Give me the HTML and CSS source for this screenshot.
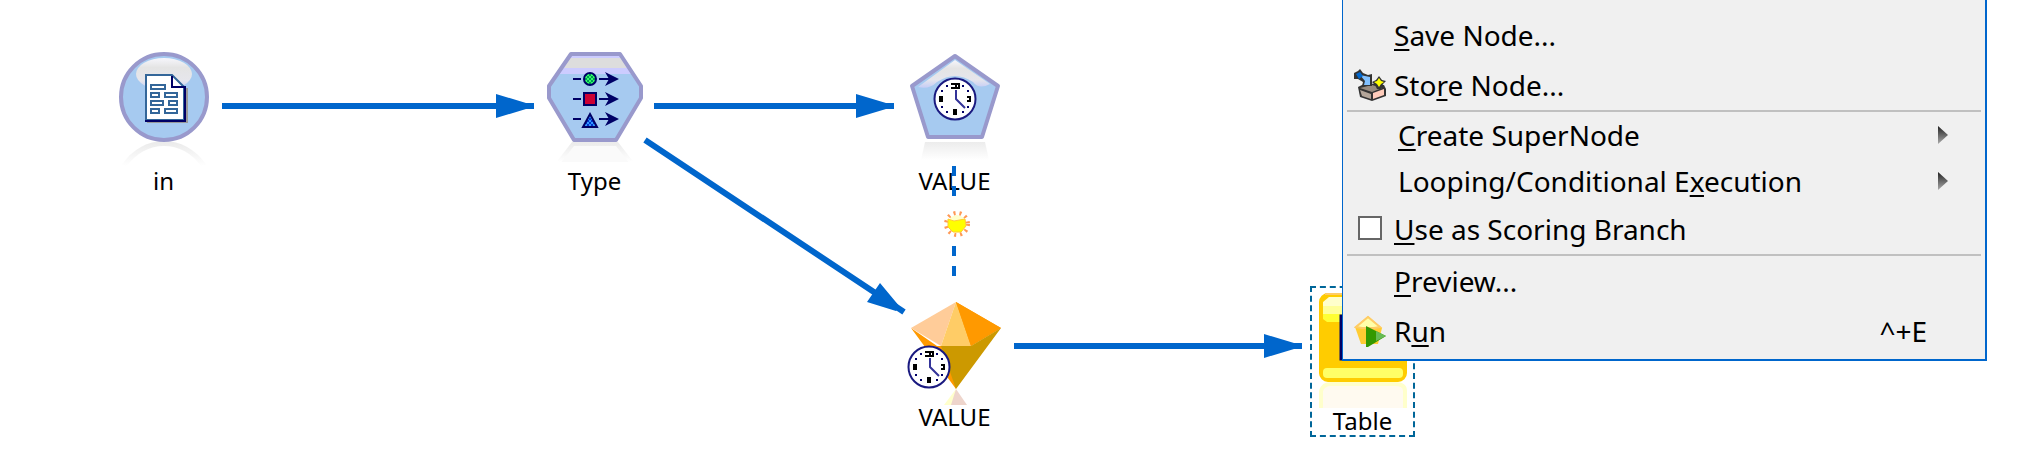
FILE: index.html
```html
<!DOCTYPE html>
<html lang="en">
<head>
<meta charset="utf-8">
<title>Stream canvas</title>
<link rel="stylesheet" href="styles.css">
</head>
<body>
<main class="canvas">
  <svg class="defs" width="0" height="0" aria-hidden="true">
    <defs>
      <linearGradient id="gloss" x1="0" y1="0" x2="0" y2="1">
        <stop offset="0" stop-color="#f6f6fc"/><stop offset=".3" stop-color="#e4e4e4"/><stop offset=".7" stop-color="#e6e6ec"/><stop offset="1" stop-color="#c4ccf6"/>
      </linearGradient>
      <linearGradient id="fade" x1="0" y1="0" x2="0" y2="1">
        <stop offset="0" stop-color="#ececec"/><stop offset="1" stop-color="#fff"/>
      </linearGradient>
      <linearGradient id="arrowShade" x1="0" y1="0" x2="0" y2="1">
        <stop offset="0" stop-color="#222"/><stop offset="1" stop-color="#aaa"/>
      </linearGradient>
      <pattern id="checkGreen" width="4" height="4" patternUnits="userSpaceOnUse">
        <path fill="#33ff66" d="M0 0h4v4H0z"/><path fill="#009955" d="M0 0h2v2H0zM2 2h2v2H2z"/>
      </pattern>
      <pattern id="checkBlue" width="4" height="4" patternUnits="userSpaceOnUse">
        <path fill="#3399ff" d="M0 0h4v4H0z"/><path fill="#0033cc" d="M0 0h2v2H0zM2 2h2v2H2z"/>
      </pattern>
      <g id="clock">
        <circle r="20.5" fill="#fff" stroke="#1a1a80" stroke-width="2"/>
        <path fill="#000" d="M-4-16h4v2h-2v2h2v2h-4v-2h2v-2h-2zM0-16h5v6h-5zM-16-3h4v6h-4zM-2 10h4v6h-4zM12-3h4v6h-4v-2h2v-2h-2z"/>
        <path fill="#fff" d="M2-14h1v2h-1z"/>
        <path fill="#000066" d="M-9-14h2v2h-2zM7-14h2v2h-2zM-14-9h2v2h-2zM12-9h2v2h-2zM-14 7h2v2h-2zM12 7h2v2h-2zM-9 12h2v2h-2zM7 12h2v2h-2z"/>
        <path fill="none" stroke="#333399" stroke-width="2" d="M1-9V0L10 9"/>
      </g>
    </defs>
  </svg>

  <figure class="node node-in">
    <svg class="node-icon" viewBox="0 0 96 118" aria-hidden="true">
      <path fill="none" stroke="url(#fade)" stroke-width="5" d="M8 114C28 84 68 84 88 114"/>
      <circle cx="48" cy="45" r="43" fill="#a6caf0" stroke="#9999cc" stroke-width="4"/>
      <ellipse cx="48" cy="22" rx="28" ry="16" fill="url(#gloss)"/>
      <path fill="#999" d="M31 67V71H72V36H68V67z"/>
      <path fill="#fff" stroke="#336699" stroke-width="2" d="M30 68V23H56L68 35V68z"/>
      <path fill="none" stroke="#000066" stroke-width="2" d="M29 69H69V35H56V24"/>
      <path fill="none" stroke="#336699" stroke-width="2" d="M35 33h14v4H35zM35 41h8v4h-8zM49 41h12v4H49zM35 49h12v4H35zM53 49h8v4h-8zM35 57h8v4h-8zM49 57h12v4H49z"/>
    </svg>
    <figcaption>in</figcaption>
  </figure>

  <figure class="node node-type">
    <svg class="node-icon" viewBox="0 0 96 118" aria-hidden="true">
      <path fill="#fafafa" stroke="url(#fade)" stroke-width="4" d="M12 110L26 92H70L84 110"/>
      <path fill="#a6caf0" d="M24 2H73L94 34V46L69 88H27L2 46V34z"/>
      <path fill="#ccccff" d="M24 2H73L86 22H11z"/>
      <path fill="#ddd" d="M23 6H74L80 16H17z"/>
      <path fill="none" stroke="#9999cc" stroke-width="4" stroke-linejoin="round" d="M24 2H73L94 34V46L69 88H27L2 46V34z"/>
      <path fill="none" stroke="#000066" stroke-width="2" d="M26 27h8M26 47h8M26 67h8M52 27h18M52 47h18M52 67h18"/>
      <path fill="#000066" d="M58 20L72 27L58 34L62 27zM58 40L72 47L58 54L62 47zM58 60L72 67L58 74L62 67z"/>
      <circle cx="43" cy="27" r="6" fill="url(#checkGreen)" stroke="#000066" stroke-width="2"/>
      <path fill="#cc0033" stroke="#000066" stroke-width="2" d="M37 41h12v12H37z"/>
      <path fill="url(#checkBlue)" stroke="#000066" stroke-width="2" d="M43 62L50 75H36z"/>
    </svg>
    <figcaption>Type</figcaption>
  </figure>

  <figure class="node node-value">
    <svg class="node-icon" viewBox="0 0 96 118" aria-hidden="true">
      <path fill="url(#fade)" d="M18 90H78L82 108H14z"/>
      <path fill="#a6caf0" d="M48 4L91 34L75 85H21L5 34z"/>
      <path fill="url(#gloss)" d="M48 8L83 32Q72 38 66 30Q48 18 30 30Q22 38 11 35z"/>
      <path fill="none" stroke="#9999cc" stroke-width="4" stroke-linejoin="round" d="M48 4L91 34L75 85H21L5 34z"/>
      <use href="#clock" x="48" y="47"/>
    </svg>
    <figcaption>VALUE</figcaption>
  </figure>

  <figure class="node node-nugget">
    <svg class="node-icon" viewBox="0 -2 96 118" aria-hidden="true">
      <path fill="#ffffcc" d="M49 99L37 115H49z"/><path fill="#eed5cc" d="M49 99L60 115H44z"/>
      <path fill="#ff9900" d="M49 12L94 38L64 56H30L4 38L49 99z"/>
      <path fill="#ffcc99" d="M49 12L4 38L34 56z"/>
      <path fill="#ffcc66" d="M49 12L64 56H34z"/>
      <path fill="#ff9900" d="M49 12L94 38L64 56z"/>
      <path fill="#cc9900" d="M34 56H64L94 38L49 99z"/>
      <use href="#clock" x="22" y="77"/>
    </svg>
    <figcaption>VALUE</figcaption>
  </figure>

  <figure class="node node-table selected">
    <svg class="node-icon" viewBox="0 0 96 118" aria-hidden="true">
      <path fill="#fffaf0" stroke="#ffffcc" stroke-width="4" d="M6 116V99Q8 92 16 92H80Q90 92 90 99V116"/>
      <rect x="6" y="3" width="84" height="85" rx="7" fill="#ffcc00" stroke="#ffcc00" stroke-width="4"/>
      <path fill="none" stroke="#ffcc66" stroke-width="2" d="M10 2H84"/>
      <path fill="#ffffcc" d="M14 5H80L88 10V16H8V10z"/><path fill="#ffff99" d="M8 14h80v8H8z"/><path fill="#ffff33" d="M8 22h80v5l-4 3H12l-4-3z"/>
      <rect x="8" y="76" width="80" height="10" rx="4" fill="#ffff66"/>
      <path fill="#fff" stroke="#000066" stroke-width="3" d="M26 24h44v43H26zM26 31h44"/>
    </svg>
    <figcaption>Table</figcaption>
  </figure>

  <svg class="links" width="1342" height="464" viewBox="0 0 1342 464" aria-hidden="true">
    <g fill="none" stroke="#0066cc" stroke-width="6">
      <path d="M222 106H534M654 106H894M1014 346H1302M645 140L904 312"/>
      <path stroke-width="4" d="M954 166v10M954 186v10M954 246v10M954 266v10"/>
    </g>
    <path fill="#0066cc" d="M496 94L526 103V109L496 118zM856 94L886 103V109L856 118zM1264 334L1294 343V349L1264 358zM880 283L900 307L896 311L867 302z"/>
    <circle cx="957" cy="224" r="9" fill="#ffffcc"/>
    <circle cx="957" cy="224" r="11" fill="none" stroke="#ff9955" stroke-width="4" stroke-dasharray="2 4"/>
    <path fill="#ffff00" stroke="#ffcc33" stroke-width="1" d="M948 219l6 2 11-2 1 7-5 6h-8l-5-5z"/>
  </svg>

  <nav class="menu" aria-label="Node menu">
    <button class="item" type="button"><span class="icon"></span><span><u>S</u>ave Node...</span></button>
    <button class="item" type="button">
      <svg class="icon" viewBox="0 0 32 32" aria-hidden="true">
        <path fill="#333" d="M4 18L12 14L30 16L32 20V27L18 32L6 28z"/>
        <path fill="#998c80" d="M6 19l12-3 10 3-10 4z"/><path fill="#b3a599" d="M6 21l11 4v5l-9-3z"/><path fill="#ffccbb" d="M19 24l11-4v6l-11 4z"/>
        <path fill="#333" d="M0 4L4 2L6 0L9 4L14 6L18 5V17H8L9 13L4 10H0z"/>
        <path fill="#80c0ff" d="M6 6l10 2v8h-6l1-4z"/>
        <path fill="#0066cc" d="M2 5l4-2 3 4-4 3z"/>
        <path fill="#333" d="M25 7l3 4 4 1-3 3-2 5h-4l-2-4-3-3 4-2z"/>
        <path fill="#ffff00" d="M25 9l2 3 3 1-3 2-2 3-2-3-3-2 3-1z"/>
      </svg>
      <span>Sto<u>r</u>e Node...</span></button>
    <hr>
    <button class="item sub" type="button"><span><u>C</u>reate SuperNode</span><svg class="arrow" viewBox="0 0 10 18" aria-hidden="true"><path fill="url(#arrowShade)" d="M0 0L10 9L0 18z"/></svg></button>
    <button class="item sub" type="button"><span>Looping/Conditional E<u>x</u>ecution</span><svg class="arrow" viewBox="0 0 10 18" aria-hidden="true"><path fill="url(#arrowShade)" d="M0 0L10 9L0 18z"/></svg></button>
    <label class="item"><span class="icon"><input class="check" type="checkbox"></span><span><u>U</u>se as Scoring Branch</span></label>
    <hr>
    <button class="item" type="button"><span class="icon"></span><span><u>P</u>review...</span></button>
    <button class="item" type="button">
      <svg class="icon" viewBox="0 0 32 32" aria-hidden="true">
        <path fill="#ffcc33" d="M14 1L28 13L24 29H7L1 12z"/>
        <path fill="#ffffaa" stroke="#ffcc66" stroke-width="2" d="M14 2L26 12L20 13H8L2 12z"/>
        <path fill="#339900" d="M12 11L32 21L14 32H12z"/><path fill="#66bb55" d="M22 16l10 5-10 5z"/>
      </svg>
      <span>R<u>u</u>n</span><kbd>^+E</kbd></button>
  </nav>
</main>
</body>
</html>
```
FILE: styles.css
```css
body {
  margin: 0;
  background: #fff;
  color: #000;
  font-family: "Noto Sans", "Open Sans", sans-serif;
}

.canvas {
  position: relative;
  min-height: 100vh;
  overflow: hidden;
}

.defs,
.links {
  position: absolute;
  top: 0;
  left: 0;
  pointer-events: none;
}

/* Stream nodes, placed freely on the canvas */
.node {
  position: absolute;
  box-sizing: border-box;
  width: 105px;
  margin: 0;
  padding: 4px 0 0;
  border: 2px dashed transparent;
  text-align: center;
}

.node-icon {
  display: block;
  width: 96px;
  height: 118px;
  margin: 0 auto;
}

.node figcaption {
  margin-top: -4px;
  font-size: 24px;
  line-height: 29px;
}

.node-in { left: 111px; top: 46px; }
.node-type { left: 542px; top: 46px; }
.node-value { left: 902px; top: 46px; }
.node-nugget { left: 902px; top: 282px; }
.node-table { left: 1310px; top: 286px; }
.selected { border-color: #006699; }

/* Context menu */
.menu {
  position: absolute;
  top: 0;
  left: 1342px;
  display: flex;
  flex-direction: column;
  box-sizing: border-box;
  width: 645px;
  padding: 10px 0 3px;
  border: solid #0066cc;
  border-width: 0 2px 2px 1px;
  background: #f0f0f0;
}

.item {
  display: flex;
  align-items: center;
  gap: 8px;
  height: 50px;
  padding: 0 58px 0 11px;
  border: 0;
  background: none;
  color: inherit;
  font: 28px "Noto Sans", "Open Sans", sans-serif;
  text-align: left;
  white-space: nowrap;
}

.sub {
  justify-content: space-between;
  height: 46px;
  padding: 0 37px 0 55px;
}

.item u {
  text-decoration-thickness: 2px;
  text-underline-offset: 3px;
  text-decoration-skip-ink: none;
}

.icon {
  display: flex;
  flex: none;
  width: 32px;
  height: 32px;
}

.arrow {
  width: 10px;
  height: 18px;
}

.check {
  appearance: none;
  box-sizing: border-box;
  width: 24px;
  height: 24px;
  margin: 3px 4px;
  border: 2px solid #666;
  background: #fff;
}

.menu hr {
  width: 634px;
  height: 2px;
  margin: 0 auto;
  border: 0;
  background: #c0c0c0;
}

.item kbd {
  margin-left: auto;
  font: inherit;
}
```
